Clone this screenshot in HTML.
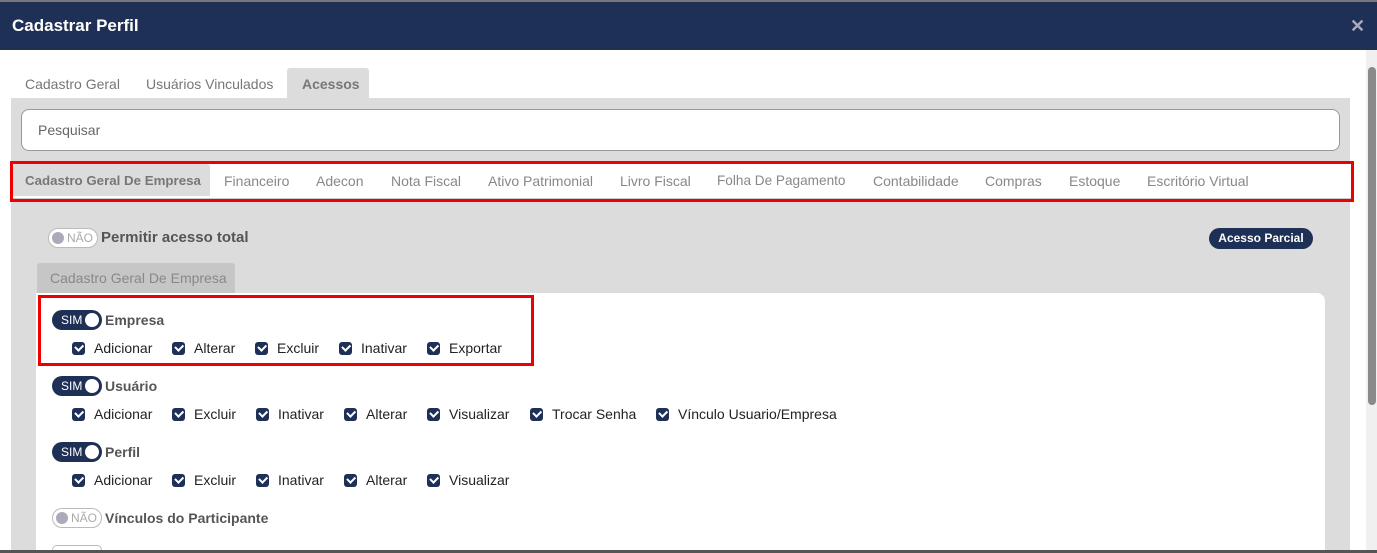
<!DOCTYPE html><html style="width:1377px;height:553px;overflow:hidden"><head><meta charset="utf-8"><style>
*{box-sizing:border-box;margin:0;padding:0}
body{width:1377px;height:553px;overflow:hidden;background:#fff;font-family:"Liberation Sans",sans-serif;position:relative}
.a{position:absolute}
.hdr{left:0;top:0;width:1377px;height:50px;background:#1f3057;border-top:2px solid #777}
.t{white-space:nowrap}
.tog{position:absolute;height:20px;border-radius:10px;font-size:12px;line-height:20px}
.on{background:#1f3057;color:#fff;width:50px;padding-left:9px}
.on:after{content:"";position:absolute;right:3px;top:3px;width:14px;height:14px;border-radius:50%;background:#fff}
.off{background:#fff;border:1px solid #bbb;color:#aaa;width:50px;padding-left:18px;line-height:18px}
.off:before{content:"";position:absolute;left:3px;top:3px;width:12px;height:12px;border-radius:50%;background:#aab}
.cb{position:absolute;width:13px;height:13px;border-radius:3px;background:#1f3057}
.cb:after{content:"";position:absolute;left:3px;top:2px;width:6px;height:3.5px;border-left:2px solid #fff;border-bottom:2px solid #fff;transform:rotate(-45deg)}
.lbl{position:absolute;font-size:14px;color:#222;white-space:nowrap}
.bl{position:absolute;font-size:14px;font-weight:bold;color:#555;white-space:nowrap}
</style></head><body>
<div class="a hdr"></div>
<div class="a t" style="left:12px;top:16px;color:#fff;font-weight:bold;font-size:17px">Cadastrar Perfil</div>
<div class="a t" style="left:1350px;top:16px;color:#aab;font-weight:bold;font-size:18px">✕</div>
<div class="a" style="left:1366px;top:50px;width:11px;height:503px;background:#f0f0f0"></div>
<div class="a" style="left:1368px;top:67px;width:8px;height:338px;background:#8a8a8a;border-radius:4px"></div>
<div class="a t" style="left:25px;top:76px;font-size:14px;color:#777">Cadastro Geral</div>
<div class="a t" style="left:146px;top:76px;font-size:14px;color:#777">Usuários Vinculados</div>
<div class="a" style="left:287px;top:68px;width:82px;height:31px;background:#dcdcdc;border-radius:3px 3px 0 0"></div>
<div class="a t" style="left:302px;top:76px;font-size:14px;color:#777;font-weight:bold">Acessos</div>
<div class="a" style="left:11px;top:98px;width:1339px;height:455px;background:#dcdcdc"></div>
<div class="a" style="left:21px;top:109px;width:1319px;height:42px;background:#fff;border:1px solid #999;border-radius:8px"></div>
<div class="a t" style="left:38px;top:122px;font-size:14px;color:#666">Pesquisar</div>
<div class="a" style="left:12px;top:163px;width:1340px;height:37px;background:#fff;border-bottom:2px solid #ccc"></div>
<div class="a" style="left:13px;top:164px;width:197px;height:32px;background:#dcdcdc;border-radius:3px 3px 0 0"></div>
<div class="a" style="left:10px;top:161px;width:1344px;height:41px;border:3px solid #e00"></div>
<div class="a t" style="left:25px;top:173px;font-size:13.3px;color:#777;font-weight:bold">Cadastro Geral De Empresa</div>
<div class="a t" style="top:173px;left:224px;font-size:14px;color:#888;word-spacing:0">Financeiro</div>
<div class="a t" style="top:173px;left:316px;font-size:14px;color:#888">Adecon</div>
<div class="a t" style="top:173px;left:391px;font-size:14px;color:#888">Nota Fiscal</div>
<div class="a t" style="top:173px;left:488px;font-size:14px;color:#888">Ativo Patrimonial</div>
<div class="a t" style="top:173px;left:620px;font-size:14px;color:#888">Livro Fiscal</div>
<div class="a t" style="top:173px;left:717px;font-size:13.6px;color:#888">Folha De Pagamento</div>
<div class="a t" style="top:173px;left:873px;font-size:14px;color:#888">Contabilidade</div>
<div class="a t" style="top:173px;left:985px;font-size:14px;color:#888">Compras</div>
<div class="a t" style="top:173px;left:1069px;font-size:14px;color:#888">Estoque</div>
<div class="a t" style="top:173px;left:1147px;font-size:14px;color:#888">Escritório Virtual</div>
<div class="tog off" style="left:48px;top:228px">NÃO</div>
<div class="a t" style="left:101px;top:229px;font-size:15px;font-weight:bold;color:#555">Permitir acesso total</div>
<div class="a t" style="left:1209px;top:228px;width:104px;height:21px;border-radius:11px;background:#1f3057;color:#fff;font-size:12px;font-weight:bold;text-align:center;line-height:21px">Acesso Parcial</div>
<div class="a" style="left:37px;top:263px;width:198px;height:30px;background:#c6c6c6;border-radius:3px 3px 0 0"></div>
<div class="a t" style="left:50px;top:270px;font-size:14px;color:#888">Cadastro Geral De Empresa</div>
<div class="a" style="left:36px;top:293px;width:1289px;height:260px;background:#fff;border-radius:0 8px 0 0"></div>
<div class="a" style="left:38px;top:295px;width:496px;height:71px;border:3px solid #e00"></div>
<div class="tog on" style="left:52px;top:310px">SIM</div><div class="bl" style="left:105px;top:312px">Empresa</div>
<div class="cb" style="left:72px;top:342px"></div><div class="lbl" style="left:94px;top:340px">Adicionar</div>
<div class="cb" style="left:172px;top:342px"></div><div class="lbl" style="left:194px;top:340px">Alterar</div>
<div class="cb" style="left:255px;top:342px"></div><div class="lbl" style="left:277px;top:340px">Excluir</div>
<div class="cb" style="left:339px;top:342px"></div><div class="lbl" style="left:361px;top:340px">Inativar</div>
<div class="cb" style="left:427px;top:342px"></div><div class="lbl" style="left:449px;top:340px">Exportar</div>
<div class="tog on" style="left:52px;top:376px">SIM</div><div class="bl" style="left:105px;top:378px">Usuário</div>
<div class="cb" style="left:72px;top:408px"></div><div class="lbl" style="left:94px;top:406px">Adicionar</div>
<div class="cb" style="left:172px;top:408px"></div><div class="lbl" style="left:194px;top:406px">Excluir</div>
<div class="cb" style="left:256px;top:408px"></div><div class="lbl" style="left:278px;top:406px">Inativar</div>
<div class="cb" style="left:344px;top:408px"></div><div class="lbl" style="left:366px;top:406px">Alterar</div>
<div class="cb" style="left:427px;top:408px"></div><div class="lbl" style="left:449px;top:406px">Visualizar</div>
<div class="cb" style="left:530px;top:408px"></div><div class="lbl" style="left:552px;top:406px">Trocar Senha</div>
<div class="cb" style="left:656px;top:408px"></div><div class="lbl" style="left:678px;top:406px">Vínculo Usuario/Empresa</div>
<div class="tog on" style="left:52px;top:442px">SIM</div><div class="bl" style="left:105px;top:444px">Perfil</div>
<div class="cb" style="left:72px;top:474px"></div><div class="lbl" style="left:94px;top:472px">Adicionar</div>
<div class="cb" style="left:172px;top:474px"></div><div class="lbl" style="left:194px;top:472px">Excluir</div>
<div class="cb" style="left:256px;top:474px"></div><div class="lbl" style="left:278px;top:472px">Inativar</div>
<div class="cb" style="left:344px;top:474px"></div><div class="lbl" style="left:366px;top:472px">Alterar</div>
<div class="cb" style="left:427px;top:474px"></div><div class="lbl" style="left:449px;top:472px">Visualizar</div>
<div class="tog off" style="left:52px;top:508px">NÃO</div><div class="bl" style="left:105px;top:510px">Vínculos do Participante</div>
<div class="a" style="left:52px;top:545px;width:50px;height:5px;border:1px solid #bbb;border-bottom:none;border-radius:10px 10px 0 0;background:#fff"></div>
<div class="a" style="left:0;top:550px;width:1377px;height:3px;background:#555"></div>
</body></html>
